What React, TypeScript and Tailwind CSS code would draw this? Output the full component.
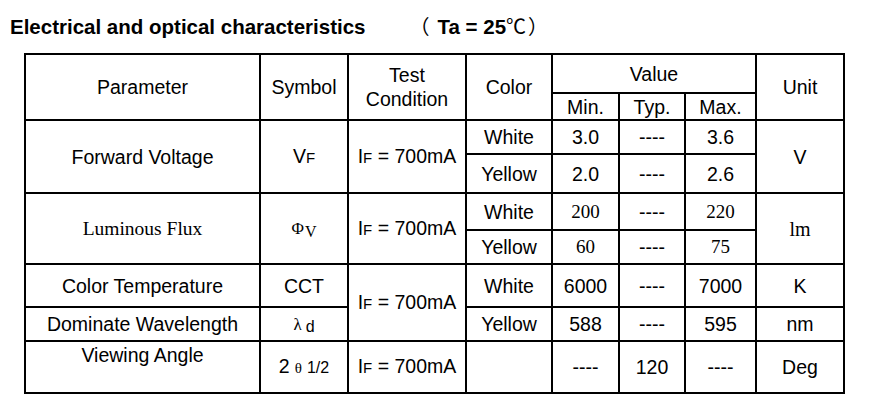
import React from 'react'

const cell = 'border-2 border-black text-center align-middle p-0'
const serif = "font-['Liberation_Serif',serif]"

const Dash = () => <span>----</span>

const App: React.FC = () => {
  return (
    <div className="w-[873px] h-[418px] bg-white text-black font-['Liberation_Sans',Arial,sans-serif] overflow-hidden">
      <h1 className="pl-[10px] pt-[11px] text-[20.5px] font-bold leading-[30px] h-[53px] whitespace-nowrap">
        Electrical and optical characteristics
        <span className="ml-[44px] font-normal font-['Noto_Sans_CJK_SC',sans-serif] text-[20px]">（</span>
        <span className="ml-[8px]">Ta = 25</span>
        <span className="font-normal font-['Noto_Sans_CJK_SC',sans-serif] text-[20px]">℃</span>
        <span className="ml-[2px] font-normal font-['Noto_Sans_CJK_SC',sans-serif] text-[20px]">）</span>
      </h1>
      <table className="ml-[24px] border-collapse table-fixed text-[19.5px] leading-[24px]">
        <colgroup>
          <col className="w-[235px]" />
          <col className="w-[88px]" />
          <col className="w-[118px]" />
          <col className="w-[86px]" />
          <col className="w-[67px]" />
          <col className="w-[66px]" />
          <col className="w-[71px]" />
          <col className="w-[88px]" />
        </colgroup>
        <tbody>
          <tr className="h-[39px]">
            <td className={cell} rowSpan={2}>Parameter</td>
            <td className={cell} rowSpan={2}>Symbol</td>
            <td className={cell} rowSpan={2}>
              Test
              <br />
              Condition
            </td>
            <td className={cell} rowSpan={2}>Color</td>
            <td className={cell} colSpan={3}>Value</td>
            <td className={cell} rowSpan={2}>Unit</td>
          </tr>
          <tr className="h-[27px]">
            <td className={cell}>Min.</td>
            <td className={cell}>Typ.</td>
            <td className={cell}>Max.</td>
          </tr>

          {/* forward voltage */}
          <tr className="h-[34px]">
            <td className={cell} rowSpan={2}>Forward Voltage</td>
            <td className={cell} rowSpan={2}>
              V<span className="text-[15px]">F</span>
            </td>
            <td className={cell} rowSpan={2}>
              I<span className="text-[15px]">F</span> = 700mA
            </td>
            <td className={cell}>White</td>
            <td className={cell}>3.0</td>
            <td className={cell}><Dash /></td>
            <td className={cell}>3.6</td>
            <td className={cell} rowSpan={2}>V</td>
          </tr>
          <tr className="h-[39px]">
            <td className={cell}>Yellow</td>
            <td className={cell}>2.0</td>
            <td className={cell}><Dash /></td>
            <td className={cell}>2.6</td>
          </tr>

          {/* luminous flux */}
          <tr className="h-[37px]">
            <td className={`${cell} ${serif} text-[19.5px]`} rowSpan={2}>
              Luminous Flux
            </td>
            <td className={`${cell} ${serif}`} rowSpan={2}>
              <span className="text-[17px]">Φ</span>
              <span className="text-[16px] relative top-[3px] ml-[1px]">V</span>
            </td>
            <td className={cell} rowSpan={2}>
              I<span className="text-[15px]">F</span> = 700mA
            </td>
            <td className={cell}>White</td>
            <td className={`${cell} ${serif} text-[19px]`}>200</td>
            <td className={cell}><Dash /></td>
            <td className={`${cell} ${serif} text-[19px]`}>220</td>
            <td className={`${cell} ${serif} text-[20px]`} rowSpan={2}>lm</td>
          </tr>
          <tr className="h-[34px]">
            <td className={cell}>Yellow</td>
            <td className={`${cell} ${serif} text-[19px]`}>60</td>
            <td className={cell}><Dash /></td>
            <td className={`${cell} ${serif} text-[19px]`}>75</td>
          </tr>

          {/* color temperature / wavelength */}
          <tr className="h-[43px]">
            <td className={cell}>Color Temperature</td>
            <td className={cell}>CCT</td>
            <td className={cell} rowSpan={2}>
              I<span className="text-[15px]">F</span> = 700mA
            </td>
            <td className={cell}>White</td>
            <td className={cell}>6000</td>
            <td className={cell}><Dash /></td>
            <td className={cell}>7000</td>
            <td className={cell}>K</td>
          </tr>
          <tr className="h-[34px]">
            <td className={cell}>Dominate Wavelength</td>
            <td className={cell}>
              <span className={`${serif} text-[17px]`}>λ</span>
              <span className="text-[16px] relative top-[2px] ml-[4px]">d</span>
            </td>
            <td className={cell}>Yellow</td>
            <td className={cell}>588</td>
            <td className={cell}><Dash /></td>
            <td className={cell}>595</td>
            <td className={cell}>nm</td>
          </tr>

          {/* viewing angle */}
          <tr className="h-[52px]">
            <td className={`${cell} align-top`}>
              <div className="pt-[1px]">Viewing Angle</div>
            </td>
            <td className={cell}>
              2<span className={`${serif} text-[15px] mx-[5px]`}>θ</span>
              <span className="text-[16px]">1/2</span>
            </td>
            <td className={cell}>
              I<span className="text-[15px]">F</span> = 700mA
            </td>
            <td className={cell}></td>
            <td className={cell}><Dash /></td>
            <td className={cell}>120</td>
            <td className={cell}><Dash /></td>
            <td className={cell}>Deg</td>
          </tr>
        </tbody>
      </table>
    </div>
  )
}

export default App
